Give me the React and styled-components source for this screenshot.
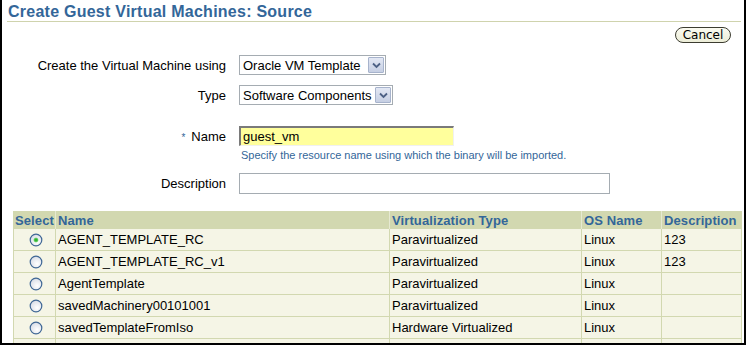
import React from 'react';
import styled, { createGlobalStyle } from 'styled-components';

const GlobalStyle = createGlobalStyle`
  body {
    margin: 0;
    background: #ffffff;
    font-family: "Liberation Sans", Arial, sans-serif;
    font-size: 13px;
    color: #000000;
  }
`;

const rows = [
  { id: 1, name: 'AGENT_TEMPLATE_RC', type: 'Paravirtualized', os: 'Linux', desc: '123', checked: true },
  { id: 2, name: 'AGENT_TEMPLATE_RC_v1', type: 'Paravirtualized', os: 'Linux', desc: '123' },
  { id: 3, name: 'AgentTemplate', type: 'Paravirtualized', os: 'Linux', desc: '' },
  { id: 4, name: 'savedMachinery00101001', type: 'Paravirtualized', os: 'Linux', desc: '' },
  { id: 5, name: 'savedTemplateFromIso', type: 'Hardware Virtualized', os: 'Linux', desc: '' },
  { id: 6, name: 'hvm_template_build', type: 'Hardware Virtualized', os: 'Linux', desc: 'hvm template' },
];

const Radio = ({ checked }) => (
  <svg width="14" height="14" viewBox="0 0 14 14">
    <defs>
      <radialGradient id="rfill" cx="0.6" cy="0.65" r="0.7">
        <stop offset="0" stopColor="#ffffff" />
        <stop offset="1" stopColor="#d6dbe5" />
      </radialGradient>
    </defs>
    <circle cx="7" cy="7" r="5.8" fill="url(#rfill)" stroke="#3f6795" strokeWidth="1.2" />
    {checked && <circle cx="7" cy="7" r="2.1" fill="#2fb52f" stroke="#6fd36f" strokeWidth="0.6" />}
  </svg>
);

const Chevron = () => (
  <svg width="9" height="7" viewBox="0 0 9 7">
    <path d="M1 1.5 L4.5 5 L8 1.5" fill="none" stroke="#4d6185" strokeWidth="1.8" />
  </svg>
);

const Select = ({ value, width }) => (
  <SelectBox $width={width}>
    <SelectText>{value}</SelectText>
    <SelectButton>
      <Chevron />
    </SelectButton>
  </SelectBox>
);

const App = () => (
  <>
    <GlobalStyle />
    <Frame>
      <Title>Create Guest Virtual Machines: Source</Title>
      <ButtonRow>
        <Button type="button">Cancel</Button>
      </ButtonRow>
      <FormRow $top={12}>
        <Label>Create the Virtual Machine using</Label>
        <Select value="Oracle VM Template" width={147} />
      </FormRow>
      <FormRow $top={10}>
        <Label>Type</Label>
        <Select value="Software Components" width={154} />
      </FormRow>
      <FormRow $top={21}>
        <Label>
          <Required>*</Required>Name
        </Label>
        <NameInput defaultValue="guest_vm" />
      </FormRow>
      <HintRow>
        <Hint>Specify the resource name using which the binary will be imported.</Hint>
      </HintRow>
      <FormRow $top={10}>
        <Label>Description</Label>
        <TextInput />
      </FormRow>
      <Table>
        <colgroup>
          <col style={{ width: 42 }} />
          <col style={{ width: 334 }} />
          <col style={{ width: 192 }} />
          <col style={{ width: 80 }} />
          <col style={{ width: 80 }} />
        </colgroup>
        <thead>
          <tr>
            <Th>Select</Th>
            <Th>Name</Th>
            <Th>Virtualization Type</Th>
            <Th>OS Name</Th>
            <Th>Description</Th>
          </tr>
        </thead>
        <tbody>
          {rows.map((row) => (
            <tr key={row.id}>
              <Td $center>
                <Radio checked={row.checked} />
              </Td>
              <Td>{row.name}</Td>
              <Td>{row.type}</Td>
              <Td>{row.os}</Td>
              <Td>{row.desc}</Td>
            </tr>
          ))}
        </tbody>
      </Table>
    </Frame>
  </>
);

const Frame = styled.div`
  box-sizing: border-box;
  width: 746px;
  height: 345px;
  overflow: hidden;
  border-left: 2px solid #000000;
  border-right: 2px solid #000000;
  border-bottom: 2px solid #000000;
  background: #ffffff;
`;

const Title = styled.h1`
  margin: 0 0 0 5px;
  width: 733px;
  padding: 2px 0 0 1px;
  height: 19px;
  line-height: 19px;
  font-size: 16px;
  letter-spacing: 0.25px;
  font-weight: bold;
  color: #336699;
  border-bottom: 1px solid #cfd3ad;
`;

const ButtonRow = styled.div`
  display: flex;
  justify-content: flex-end;
  margin: 5px 13px 0 0;
`;

const Button = styled.button`
  box-sizing: border-box;
  height: 16px;
  width: 56px;
  padding: 0;
  border: 1px solid #3c3c30;
  border-radius: 8px;
  background: linear-gradient(#fbfbf1, #ecedd8);
  font-family: "DejaVu Sans", Tahoma, sans-serif;
  font-size: 12px;
  line-height: 14px;
  color: #000000;
`;

const FormRow = styled.div`
  display: grid;
  grid-template-columns: 224px auto;
  column-gap: 13px;
  align-items: center;
  justify-content: start;
  margin-top: ${(p) => p.$top}px;
`;

const Label = styled.label`
  text-align: right;
  font-size: 13px;
  color: #000000;
`;

const Required = styled.span`
  color: #336699;
  font-size: 10px;
  margin-right: 6px;
`;

const SelectBox = styled.div`
  box-sizing: border-box;
  display: flex;
  align-items: center;
  justify-content: space-between;
  width: ${(p) => p.$width}px;
  height: 20px;
  border: 1px solid #a5acb2;
  background: #ffffff;
  padding: 0 1px 0 3px;
`;

const SelectText = styled.span`
  font-size: 13px;
  white-space: nowrap;
`;

const SelectButton = styled.span`
  box-sizing: border-box;
  display: flex;
  align-items: center;
  justify-content: center;
  width: 16px;
  height: 16px;
  border: 1px solid #a7b3cc;
  border-radius: 1px;
  background: linear-gradient(#e3e8f4, #c6cfe3);
`;

const NameInput = styled.input`
  box-sizing: border-box;
  width: 215px;
  height: 20px;
  margin: 0;
  padding: 0 2px;
  border-style: solid;
  border-width: 2px 1px 1px 2px;
  border-color: #7a7a7a #f0f0f0 #f0f0f0 #7a7a7a;
  background: #ffff9c;
  font-family: "Liberation Sans", Arial, sans-serif;
  font-size: 13px;
  color: #000000;
  outline: none;
`;

const TextInput = styled.input`
  box-sizing: border-box;
  width: 371px;
  height: 21px;
  margin: 0;
  padding: 0 2px;
  border: 1px solid #a5acb2;
  background: #ffffff;
  font-family: "Liberation Sans", Arial, sans-serif;
  font-size: 13px;
  outline: none;
`;

const HintRow = styled.div`
  padding-left: 239px;
  margin-top: 2px;
`;

const Hint = styled.div`
  font-size: 11px;
  line-height: 15px;
  color: #336699;
`;

const Table = styled.table`
  margin: 17px 0 0 11px;
  width: 728px;
  table-layout: fixed;
  border-collapse: collapse;
  font-size: 13px;
`;

const Th = styled.th`
  height: 18px;
  padding: 0 0 0 2px;
  text-align: left;
  font-weight: bold;
  letter-spacing: 0.1px;
  color: #336699;
  background: #d2d8b0;
  border-left: 1px solid #e6e9d2;
  white-space: nowrap;
  overflow: hidden;
  &:first-child {
    border-left-color: #d2d8b0;
    padding-left: 1px;
  }
`;

const Td = styled.td`
  height: 21px;
  padding: 0 0 0 2px;
  background: #f5f5e6;
  border: 1px solid #d2d8b0;
  border-top: none;
  white-space: nowrap;
  overflow: hidden;
  text-align: ${(p) => (p.$center ? 'center' : 'left')};
  vertical-align: middle;
  svg {
    display: block;
    margin: 0 auto;
  }
`;

export default App;
